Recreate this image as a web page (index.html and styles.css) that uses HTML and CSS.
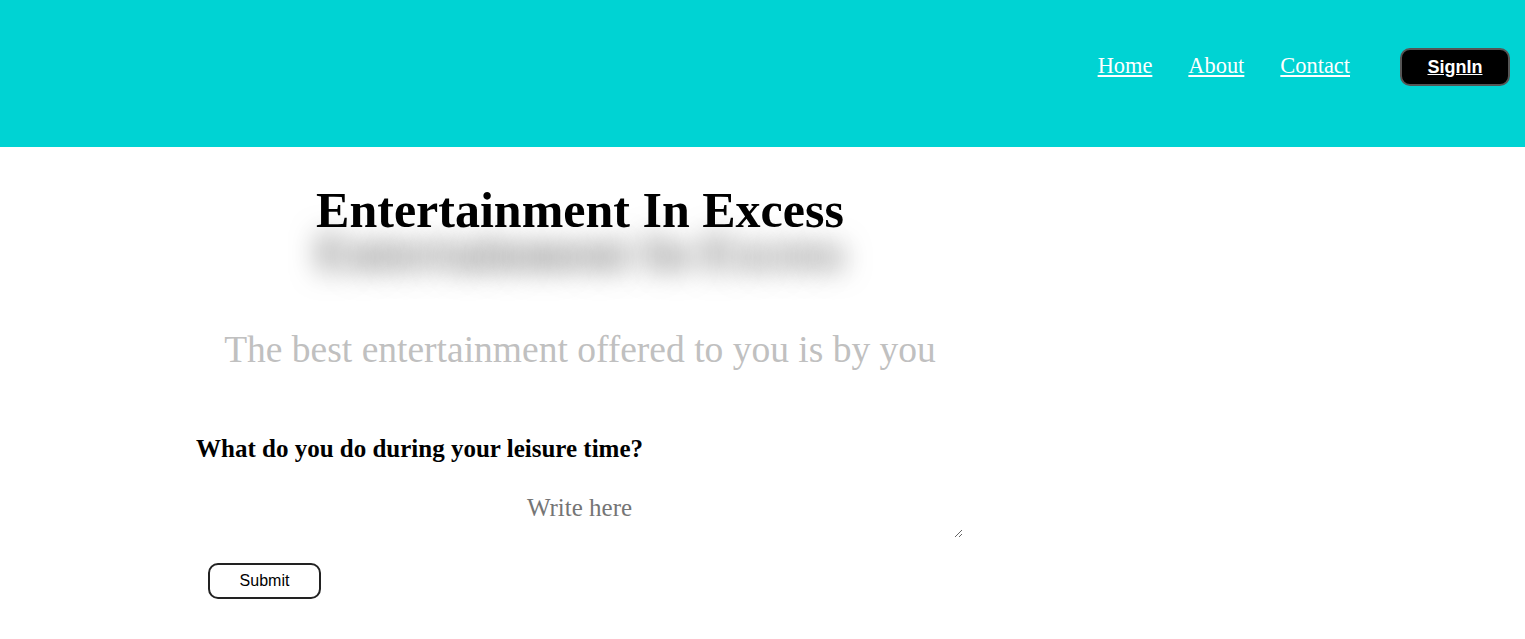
FILE: index.html
```html
<!DOCTYPE html>
<html>
<head>
<meta charset="utf-8">
<title>Entertainment In Excess</title>
<link rel="stylesheet" href="styles.css">
</head>
<body>
<header class="topbar">
  <nav class="nav">
    <a href="#" class="nav-link">Home</a>
    <a href="#" class="nav-link">About</a>
    <a href="#" class="nav-link">Contact</a>
    <a href="#" class="signin">SignIn</a>
  </nav>
</header>
<main class="content">
  <h1 class="title">Entertainment In Excess</h1>
  <p class="tagline">The best entertainment offered to you is by you</p>
  <form class="form">
    <label class="question" for="leisure">What do you do during your leisure time?</label>
    <textarea id="leisure" class="answer" placeholder="Write here"></textarea>
    <button type="button" class="submit">Submit</button>
  </form>
</main>
</body>
</html>
```
FILE: styles.css
```css
body {
  margin: 0;
  font-family: "Liberation Serif", "Times New Roman", serif;
  background: #fff;
}
.topbar {
  height: 147px;
  background: #00d3d3;
  display: flex;
  justify-content: flex-end;
  align-items: flex-start;
}
.nav {
  display: flex;
  align-items: center;
  margin-top: 48px;
  margin-right: 15px;
}
.nav-link {
  color: #fff;
  font-size: 22.4px;
  margin-left: 36px;
  margin-top: -2px;
  text-decoration: underline;
}
.signin {
  margin-left: 50px;
  width: 110px;
  height: 38px;
  box-sizing: border-box;
  background: #000;
  border: 2px solid #555;
  border-radius: 10px;
  color: #fff;
  font-family: "Liberation Sans", Arial, sans-serif;
  font-weight: bold;
  font-size: 18px;
  display: flex;
  align-items: center;
  justify-content: center;
}
.content {
  width: 768px;
  margin-left: 196px;
}
.title {
  text-align: center;
  font-size: 50px;
  font-weight: bold;
  margin: 34px 0 0;
  line-height: 58px;
  text-shadow: 0 42px 28px rgba(0,0,0,0.6);
}
.tagline {
  text-align: center;
  font-size: 37.5px;
  color: #c0c0c0;
  margin: 90px 0 0;
  line-height: 42px;
}
.form {
  display: flex;
  flex-direction: column;
  align-items: flex-start;
  margin-top: 64px;
}
.question {
  font-size: 25px;
  font-weight: bold;
  line-height: 28px;
}
.answer {
  margin-top: 29px;
  width: 767px;
  height: 46px;
  box-sizing: border-box;
  border: none;
  outline: none;
  text-align: center;
  font-family: "Liberation Serif", "Times New Roman", serif;
  font-size: 25px;
  padding: 2px;
  resize: both;
}
.answer::placeholder {
  color: #757575;
}
.submit {
  margin: 25px 0 0 12px;
  width: 113px;
  height: 36px;
  background: #fff;
  border: 2px solid #222;
  border-radius: 10px;
  font-family: "Liberation Sans", Arial, sans-serif;
  font-size: 16px;
  color: #000;
}
```
